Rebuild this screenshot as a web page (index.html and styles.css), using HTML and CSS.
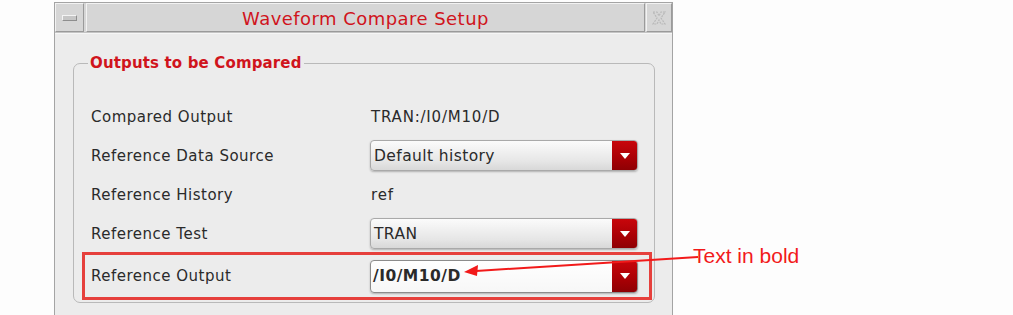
FILE: index.html
```html
<!DOCTYPE html>
<html lang="en">
<head>
  <meta charset="UTF-8">
  <title>Waveform Compare Setup</title>
  <link rel="stylesheet" href="styles.css">
</head>
<body>
  <div class="page">
    <div class="window">
      <div class="titlebar">
        <div class="tb-btn tb-min"><span class="min-bar"></span></div>
        <div class="tb-title">Waveform Compare Setup</div>
        <div class="tb-btn tb-close">
          <svg width="16" height="18" viewBox="0 0 16 18">
            <path d="M2 3 L6 3 L8 7 L10 3 L14 3 L10 9 L14 15 L10 15 L8 11 L6 15 L2 15 L6 9 Z" fill="none" stroke="#b8b8b8" stroke-width="1.2" stroke-dasharray="2 1"/>
          </svg>
        </div>
      </div>

      <div class="content">
        <fieldset class="group">
          <legend>Outputs to be Compared</legend>

          <div class="row">
            <span class="label">Compared Output</span>
            <span class="value">TRAN:/I0/M10/D</span>
          </div>
          <div class="row">
            <span class="label">Reference Data Source</span>
            <div class="combo"><span class="combo-text">Default history</span><span class="combo-btn"><i></i></span></div>
          </div>
          <div class="row">
            <span class="label">Reference History</span>
            <span class="value">ref</span>
          </div>
          <div class="row">
            <span class="label">Reference Test</span>
            <div class="combo"><span class="combo-text">TRAN</span><span class="combo-btn"><i></i></span></div>
          </div>
          <div class="row highlight">
            <span class="label">Reference Output</span>
            <div class="combo combo-white"><span class="combo-text bold">/I0/M10/D</span><span class="combo-btn"><i></i></span></div>
          </div>
        </fieldset>
      </div>
    </div>

    <!-- annotation -->
    <svg class="arrow" width="240" height="30" viewBox="0 0 240 30">
      <line x1="236" y1="7" x2="14" y2="21" stroke="#f21a1a" stroke-width="2"/>
      <path d="M2 22 L16 15 L15 26 Z" fill="#f21a1a"/>
    </svg>
    <div class="note">Text in bold</div>
  </div>
</body>
</html>
```

FILE: styles.css
```css
body {
  margin: 0;
  background: #fdfdfd;
  font-family: "DejaVu Sans", sans-serif;
  color: #2a2a2a;
}
.page {
  position: relative;
  padding: 2px 0 0 54px;
  height: 313px;
  overflow: hidden;
}
.window {
  width: 617px;
  height: 320px;
  border: 1px solid #a4a4a4;
  border-bottom: none;
  background: #ececec;
}
.titlebar {
  display: flex;
  height: 29px;
  background: #d6d6d6;
  border-bottom: 1px solid #c4c4c4;
  box-shadow: 0 1px 0 #f6f6f6;
}
.tb-btn {
  width: 26px;
  display: flex;
  align-items: center;
  justify-content: center;
  border-top: 1px solid #f2f2f2;
  border-left: 1px solid #f2f2f2;
  border-right: 1px solid #9a9a9a;
  border-bottom: 1px solid #9a9a9a;
  box-sizing: border-box;
}
.tb-min {
  width: 29px;
}
.min-bar {
  width: 13px;
  height: 4px;
  background: #c6c6c6;
  border-top: 1px solid #f4f4f4;
  border-left: 1px solid #f4f4f4;
  border-bottom: 1px solid #8e8e8e;
  border-right: 1px solid #8e8e8e;
}
.tb-title {
  flex: 1;
  text-align: center;
  font-size: 18px;
  letter-spacing: 0.45px;
  line-height: 29px;
  color: #d0141c;
  border-top: 1px solid #f2f2f2;
  border-left: 1px solid #f2f2f2;
  border-right: 1px solid #9a9a9a;
  border-bottom: 1px solid #9a9a9a;
  box-sizing: border-box;
  margin: 0 1px 0 2px;
}
.content {
  padding: 21px 17px 0 18px;
}
.group {
  margin: 0;
  padding: 25px 16px 2px 17px;
  border: 1px solid #b9b9b9;
  border-radius: 7px;
}
.group legend {
  margin-left: -3px;
  padding: 0 2px;
  font-weight: bold;
  font-size: 15px;
  letter-spacing: 0.15px;
  line-height: 18px;
  color: #d0141c;
}
.row {
  display: flex;
  align-items: center;
  height: 39px;
  font-size: 15px;
  letter-spacing: 0.5px;
}
.label {
  width: 279px;
  flex: none;
}
.value {
  padding-left: 1px;
  letter-spacing: 0.8px;
}
.combo {
  display: flex;
  width: 268px;
  height: 31px;
  box-sizing: border-box;
  border: 1px solid #a9a9a9;
  border-radius: 4px;
  background: linear-gradient(#fbfbfb, #e6e6e6 70%, #d8d8d8);
  box-shadow: 0 1px 2px rgba(0, 0, 0, 0.25);
  overflow: hidden;
}
.combo-white {
  background: linear-gradient(#ffffff, #f7f7f7);
  border-color: #8c8c8c;
  height: 33px;
}
.combo-text {
  flex: 1;
  align-self: center;
  padding-left: 3px;
  font-size: 15.5px;
  letter-spacing: 0.4px;
}
.combo-text.bold {
  font-weight: bold;
  letter-spacing: 0.5px;
  padding-left: 2px;
}
.combo-btn {
  width: 25px;
  display: flex;
  align-items: center;
  justify-content: center;
  background: linear-gradient(#c8060b, #a80005 60%, #8e0004);
}
.combo-btn i {
  width: 0;
  height: 0;
  border-left: 5px solid transparent;
  border-right: 5px solid transparent;
  border-top: 6px solid #fff;
}
.highlight {
  height: 42px;
  margin: -1px -14px 0 -9px;
  padding-left: 6px;
  border: 3px solid #e6403c;
}
.arrow {
  position: absolute;
  left: 462px;
  top: 250px;
}
.note {
  position: absolute;
  left: 693px;
  top: 244px;
  font-family: "Liberation Sans", Arial, sans-serif;
  font-size: 21px;
  color: #f21a1a;
}
```
